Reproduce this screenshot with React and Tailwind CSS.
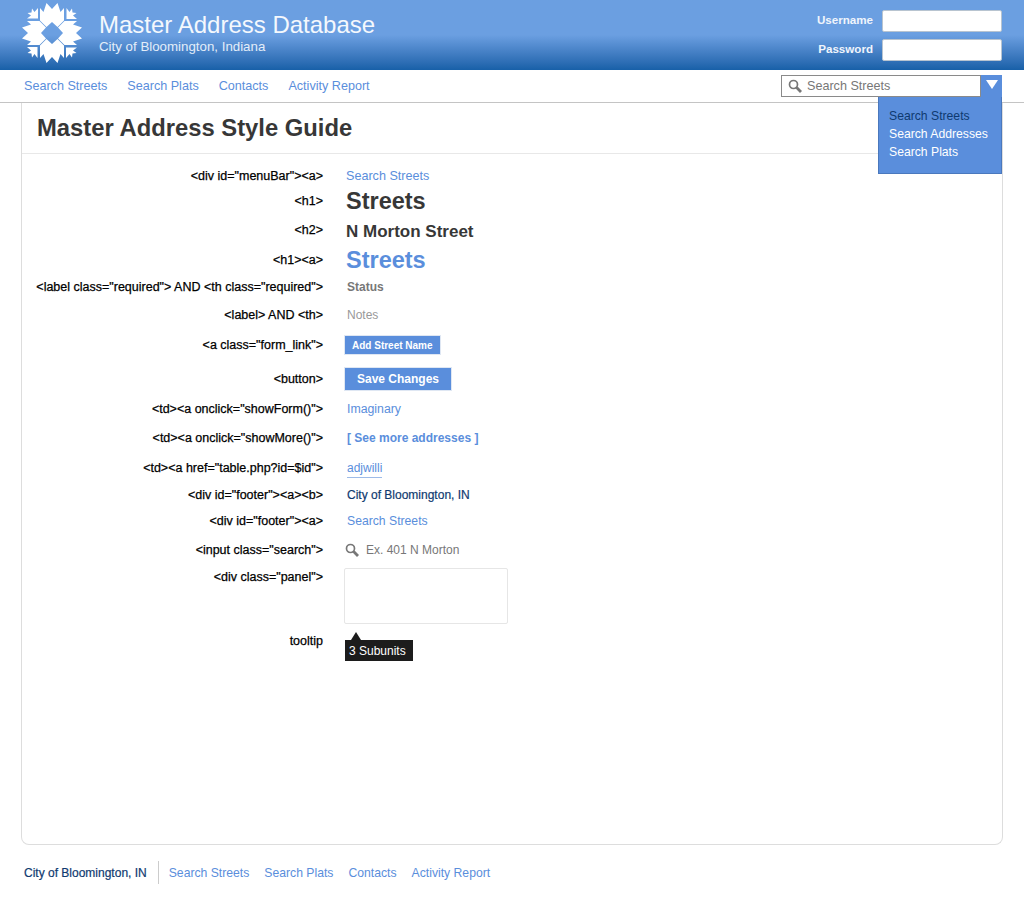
import React from 'react'

const menuLinks = ['Search Streets', 'Search Plats', 'Contacts', 'Activity Report']

const Logo = () => {
  // one arm of the quilt star plus its corner block, repeated four times around the centre
  const arm = 'M0 -11 L-5.5 -6 L-12 -12.5 L-12 -25 L-8.5 -21 L-5.5 -30 L0 -24 L5.5 -30 L8.5 -21 L12 -25 L12 -12.5 L5.5 -6 Z'
  const corner = 'M-14 -14.5 L-14 -25 L-17.5 -21 L-20 -24.5 L-20.5 -20.5 L-24.5 -20 L-21 -17.5 L-25 -14.5 Z'
  return (
    <svg width="60" height="60" viewBox="-30 -30 60 60" className="shrink-0">
      {[0, 90, 180, 270].map((r) => (
        <g key={r} transform={`rotate(${r})`} fill="#fff">
          <path d={arm} />
          <path d={corner} />
        </g>
      ))}
    </svg>
  )
}

const Magnifier = ({ className }) => (
  <svg width="14" height="14" viewBox="0 0 14 14" className={className} fill="none" stroke="#777">
    <circle cx="5.5" cy="5.5" r="4" strokeWidth="1.7" />
    <line x1="8.6" y1="8.6" x2="13" y2="13" strokeWidth="2.8" />
  </svg>
)

const Row = ({ label, h, children }) => (
  <div className="flex items-center" style={{ height: h }}>
    <div className="w-[301px] shrink-0 text-right text-[12.5px] text-black [-webkit-text-stroke:0.25px]">{label}</div>
    <div className="ml-[22px] flex items-center">{children}</div>
  </div>
)

export default function App() {
  return (
    <div className="relative min-h-[900px] bg-white font-['Liberation_Sans',Arial,sans-serif]">
      <header className="flex h-[70px] items-start justify-between bg-gradient-to-b from-[#6b9fe1] from-50% to-[#1760a8] pl-[22px] pr-[22px]">
        <div className="flex pt-[3px]">
          <Logo />
          <div className="ml-[17px] pt-[7px] text-white">
            <div className="text-[24px] leading-[30px] text-[#f4f8fd]">Master Address Database</div>
            <div className="text-[13.3px] leading-[13px] text-[#e3edf9]">City of Bloomington, Indiana</div>
          </div>
        </div>
        <div className="flex w-[200px] flex-col gap-[7px] pt-[10px]">
          <div className="flex items-center justify-end gap-[9px]">
            <span className="pb-[2px] text-[11.6px] font-bold text-[#f0f5fc]">Username</span>
            <input className="h-[22px] w-[120px] rounded-[2px] border border-[#b8c4d0] bg-white" />
          </div>
          <div className="flex items-center justify-end gap-[9px]">
            <span className="pb-[2px] text-[11.6px] font-bold text-[#f0f5fc]">Password</span>
            <input className="h-[22px] w-[120px] rounded-[2px] border border-[#b8c4d0] bg-white" />
          </div>
        </div>
      </header>

      <nav className="flex h-[33px] items-center justify-between border-b border-[#c4c4c4] pl-[24px] pr-[22px]">
        <div className="flex gap-[20px] text-[12.6px] text-[#5a8edc]">
          {menuLinks.map((l) => (
            <a key={l}>{l}</a>
          ))}
        </div>
        <div className="relative flex h-[22px] w-[221px]">
          <div className="flex h-[22px] w-[200px] items-center border border-[#8a8a8a] bg-white pl-[6px] text-[12.6px] text-[#777]">
            <Magnifier />
            <span className="ml-[5px]">Search Streets</span>
          </div>
          <div className="flex flex-1 items-start justify-center bg-[#5a8edc] pt-[5px]">
            <div className="h-0 w-0 border-x-[6px] border-t-[9px] border-x-transparent border-t-white" />
          </div>
          <div className="absolute left-[97px] top-[22px] z-10 flex h-[77px] w-[124px] flex-col border border-[#4a78bd] border-t-0 bg-[#5a8edc] pl-[10px] pt-[10px] text-[12.2px] leading-[18px] text-white">
            <a className="text-[#0f3a70]">Search Streets</a>
            <a>Search Addresses</a>
            <a>Search Plats</a>
          </div>
        </div>
      </nav>

      <main className="mx-[21px] h-[742px] rounded-b-[8px] border-x border-b border-[#dddddd]">
        <h1 className="h-[51px] border-b border-[#e8e8e8] pl-[15px] pt-[10px] text-[23.8px] font-bold leading-[30px] text-[#373737]">
          Master Address Style Guide
        </h1>
        <div className="pt-[9px]">
          <Row label={'<div id="menuBar"><a>'} h={26}>
            <a className="pl-[1px] text-[12.6px] text-[#5a8edc]">Search Streets</a>
          </Row>
          <Row label="<h1>" h={24}>
            <span className="pl-[1px] pt-[2px] text-[23.5px] font-bold text-[#373737]">Streets</span>
          </Row>
          <Row label="<h2>" h={34}>
            <span className="pl-[1px] pt-[3px] text-[17px] font-bold text-[#373737]">N Morton Street</span>
          </Row>
          <Row label="<h1><a>" h={26}>
            <a className="pl-[1px] pt-[2px] text-[23.5px] font-bold text-[#5a8edc]">Streets</a>
          </Row>
          <Row label={'<label class="required"> AND <th class="required">'} h={28}>
            <span className="pl-[2px] text-[12px] font-bold text-[#777]">Status</span>
          </Row>
          <Row label="<label> AND <th>" h={28}>
            <span className="pl-[2px] text-[12px] text-[#999]">Notes</span>
          </Row>
          <Row label={'<a class="form_link">'} h={32}>
            <a className="-ml-[1px] flex h-[20px] items-center border border-[#dfe7f3] bg-[#5a8edc] px-[7px] text-[10px] font-bold text-white">Add Street Name</a>
          </Row>
          <Row label="<button>" h={36}>
            <button className="-ml-[1px] h-[24px] w-[108px] border border-[#dfe7f3] bg-[#5a8edc] text-[12px] font-bold text-white">Save Changes</button>
          </Row>
          <Row label={'<td><a onclick="showForm()">'} h={24}>
            <a className="pl-[2px] text-[12.3px] text-[#5a8edc]">Imaginary</a>
          </Row>
          <Row label={'<td><a onclick="showMore()">'} h={34}>
            <a className="pl-[2px] text-[12px] font-bold text-[#5a8edc]">[ See more addresses ]</a>
          </Row>
          <Row label={'<td><a href="table.php?id=$id">'} h={26}>
            <a className="ml-[2px] border-b border-[#9dbbe8] text-[12px] text-[#5a8edc]">adjwilli</a>
          </Row>
          <Row label={'<div id="footer"><a><b>'} h={28}>
            <a className="pl-[2px] text-[12px] text-[#0f3a70] [-webkit-text-stroke:0.2px]">City of Bloomington, IN</a>
          </Row>
          <Row label={'<div id="footer"><a>'} h={24}>
            <a className="pl-[2px] text-[12.2px] text-[#5a8edc]">Search Streets</a>
          </Row>
          <Row label={'<input class="search">'} h={34}>
            <Magnifier />
            <span className="ml-[7px] text-[12px] text-[#777]">Ex. 401 N Morton</span>
          </Row>
          <div className="flex items-start pt-[1px]">
            <div className="w-[301px] shrink-0 text-right text-[12.5px] text-black [-webkit-text-stroke:0.25px]">{'<div class="panel">'}</div>
            <div className="ml-[21px] h-[56px] w-[164px] rounded-[2px] border border-[#e6e6e6]" />
          </div>
          <div className="flex items-start pt-[8px]">
            <div className="w-[301px] shrink-0 text-right text-[12.5px] text-black [-webkit-text-stroke:0.25px]">tooltip</div>
            <div className="relative ml-[22px] mt-[8px] flex h-[21px] w-[68px] items-center bg-[#1c1c1c] pl-[4px] text-[12px] text-white">
              3 Subunits
              <div className="absolute -top-[8px] left-[6px] h-0 w-0 border-x-[5px] border-b-[8px] border-x-transparent border-b-[#1c1c1c]" />
            </div>
          </div>
        </div>
      </main>

      <footer className="flex items-center pl-[24px] pt-[16px] text-[12.2px]">
        <a className="flex h-[23px] items-center border-r border-[#ccc] pr-[11px] text-[12px] text-[#0f3a70] [-webkit-text-stroke:0.2px]">City of Bloomington, IN</a>
        <div className="ml-[10px] flex gap-[15px] pt-[1px] text-[#5a8edc]">
          {menuLinks.map((l) => (
            <a key={l}>{l}</a>
          ))}
        </div>
      </footer>
    </div>
  )
}
